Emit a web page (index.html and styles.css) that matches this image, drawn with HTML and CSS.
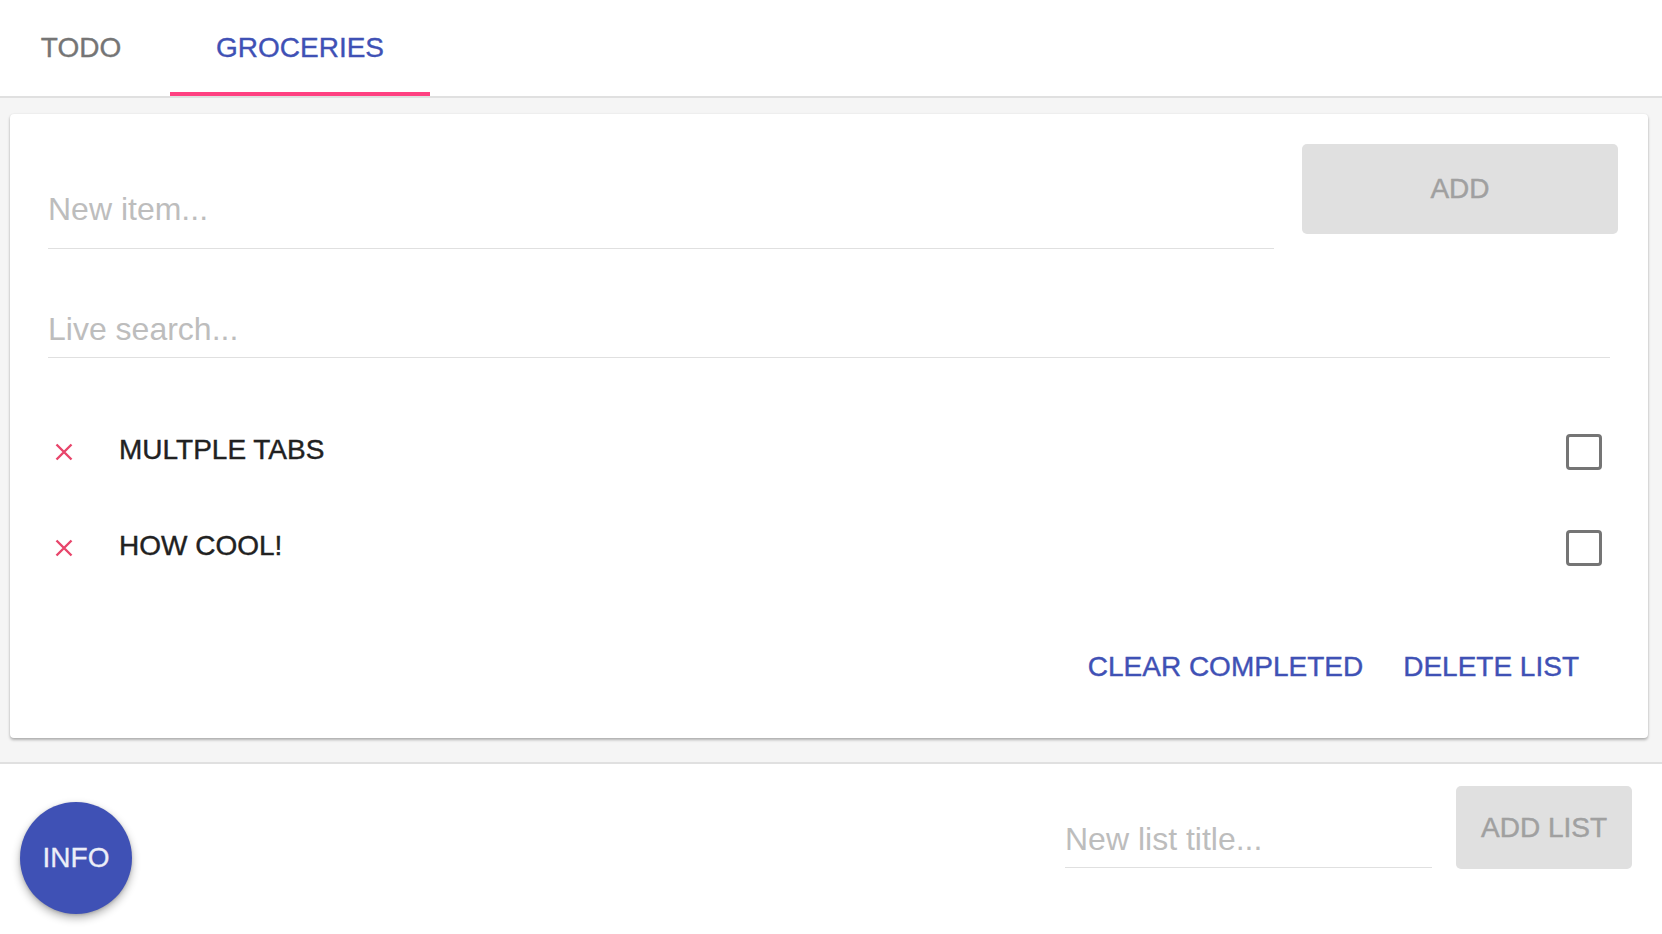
FILE: index.html
```html
<!DOCTYPE html>
<html>
<head>
<meta charset="utf-8">
<title>Lists</title>
<link rel="stylesheet" href="styles.css">
</head>
<body>
<header class="tabs">
  <div class="tab tab-first">TODO</div>
  <div class="tab tab-active">GROCERIES</div>
</header>
<main class="main">
  <section class="card">
    <div class="add-row">
      <input class="field field-new" type="text" placeholder="New item...">
      <button class="btn-disabled btn-add">ADD</button>
    </div>
    <input class="field field-search" type="text" placeholder="Live search...">
    <ul class="items">
      <li class="item">
        <svg class="x-icon" width="18" height="18" viewBox="0 0 18 18"><path d="M1.5 1.5 L16.5 16.5 M16.5 1.5 L1.5 16.5" stroke="#e8456b" stroke-width="2.4" fill="none"/></svg>
        <span class="item-text">MULTPLE TABS</span>
        <span class="checkbox"></span>
      </li>
      <li class="item">
        <svg class="x-icon" width="18" height="18" viewBox="0 0 18 18"><path d="M1.5 1.5 L16.5 16.5 M16.5 1.5 L1.5 16.5" stroke="#e8456b" stroke-width="2.4" fill="none"/></svg>
        <span class="item-text">HOW COOL!</span>
        <span class="checkbox"></span>
      </li>
    </ul>
    <div class="actions">
      <button class="btn-flat">CLEAR COMPLETED</button>
      <button class="btn-flat">DELETE LIST</button>
    </div>
  </section>
</main>
<footer class="footer">
  <button class="fab">INFO</button>
  <div class="footer-right">
    <input class="field field-list" type="text" placeholder="New list title...">
    <button class="btn-disabled btn-addlist">ADD LIST</button>
  </div>
</footer>
</body>
</html>
```

FILE: styles.css
```css
* { box-sizing: border-box; }
html, body { margin: 0; padding: 0; }
body {
  font-family: "Liberation Sans", Arial, Helvetica, sans-serif;
  background: #ffffff;
  color: #212121;
  width: 1662px;
  height: 934px;
  overflow: hidden;
}

.medium { -webkit-text-stroke: 0.4px currentColor; }

.tabs {
  display: flex;
  height: 98px;
  border-bottom: 2px solid #e0e0e0;
  background: #fff;
}
.tab {
  height: 96px;
  display: flex;
  align-items: center;
  justify-content: center;
  font-size: 28px;
  color: #757575;
  -webkit-text-stroke: 0.35px currentColor;
}
.tab-first { width: 170px; padding-right: 8px; }
.tab-active {
  width: 260px;
  color: #3f51b5;
  box-shadow: inset 0 -4px 0 #ff4081;
}

.main {
  background: #f5f5f5;
  padding: 16px 14px 24px 10px;
}
.card {
  background: #fff;
  border-radius: 4px;
  box-shadow: 0 2px 3px rgba(0,0,0,0.28), 0 0 2px rgba(0,0,0,0.08);
  height: 624px;
  padding: 30px 30px 0 38px;
}

.field {
  display: block;
  border: none;
  border-bottom: 1px solid #e0e0e0;
  outline: none;
  padding: 0;
  font-family: "Liberation Sans", Arial, Helvetica, sans-serif;
  font-size: 32px;
  color: #212121;
  background: transparent;
}
.field::placeholder { color: #bdbdbd; }

.add-row {
  display: flex;
  align-items: flex-start;
  gap: 28px;
}
.field-new {
  flex: 1;
  height: 78px;
  margin-top: 27px;
}
.btn-disabled {
  border: none;
  background: #e0e0e0;
  color: #a0a0a0;
  font-family: "Liberation Sans", Arial, Helvetica, sans-serif;
  font-size: 28px;
  border-radius: 5px;
  padding: 0;
  -webkit-text-stroke: 0.45px currentColor;
}
.btn-add {
  width: 316px;
  height: 90px;
}

.field-search {
  width: calc(100% - 8px);
  height: 56px;
  margin-top: 53px;
}

.items {
  list-style: none;
  margin: 46px 0 0 0;
  padding: 0;
}
.item {
  display: flex;
  align-items: center;
  height: 96px;
}
.x-icon {
  margin-left: 7px;
  flex: none;
}
.item-text {
  margin-left: 46px;
  padding-bottom: 4px;
  font-size: 28px;
  color: #212121;
  flex: 1;
  -webkit-text-stroke: 0.4px currentColor;
}
.checkbox {
  width: 36px;
  height: 36px;
  border: 3.5px solid #757575;
  border-radius: 4px;
  margin-right: 16px;
  flex: none;
}

.actions {
  display: flex;
  justify-content: flex-end;
  align-items: center;
  gap: 40px;
  height: 142px;
  padding-right: 39px;
}
.btn-flat {
  border: none;
  background: transparent;
  color: #3f51b5;
  font-family: "Liberation Sans", Arial, Helvetica, sans-serif;
  font-size: 28px;
  padding: 0;
  -webkit-text-stroke: 0.4px currentColor;
}

.footer {
  height: 172px;
  border-top: 2px solid #e0e0e0;
  display: flex;
  justify-content: space-between;
  align-items: flex-start;
  padding: 0 30px 0 20px;
}
.fab {
  width: 112px;
  height: 112px;
  border-radius: 50%;
  border: none;
  margin-top: 38px;
  background: #3f51b5;
  color: #eceef8;
  font-family: "Liberation Sans", Arial, Helvetica, sans-serif;
  font-size: 28px;
  padding: 0;
  -webkit-text-stroke: 0.3px currentColor;
  box-shadow: 0 4px 9px rgba(0,0,0,0.3), 0 1px 3px rgba(0,0,0,0.15);
}
.footer-right {
  display: flex;
  align-items: flex-start;
  gap: 24px;
}
.field-list {
  width: 367px;
  height: 56px;
  margin-top: 48px;
}
.btn-addlist {
  width: 176px;
  height: 83px;
  margin-top: 22px;
}
```
